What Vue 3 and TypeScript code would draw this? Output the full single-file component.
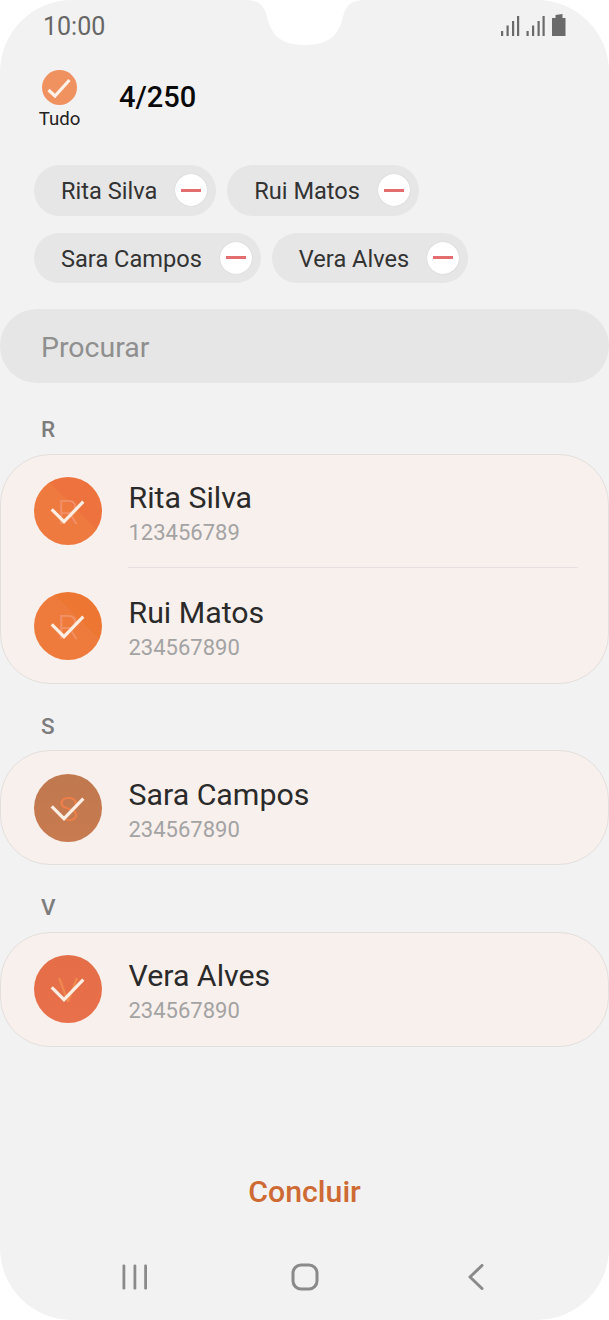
<script setup lang="ts">
interface Contact {
  name: string
  phone: string
  initial: string
  tint: string
  initialColor: string
}

interface Section {
  letter: string
  contacts: Contact[]
}

const chipRows: string[][] = [
  ['Rita Silva', 'Rui Matos'],
  ['Sara Campos', 'Vera Alves'],
]

const sections: Section[] = [
  {
    letter: 'R',
    contacts: [
      { name: 'Rita Silva', phone: '123456789', initial: 'R', tint: 'linear-gradient(45deg, #ee7a3f 57%, #ee723e 58%)', initialColor: '#f28f66' },
      { name: 'Rui Matos', phone: '234567890', initial: 'R', tint: 'linear-gradient(45deg, #ee7a3c 63%, #ec7632 64%)', initialColor: '#f29064' },
    ],
  },
  {
    letter: 'S',
    contacts: [
      { name: 'Sara Campos', phone: '234567890', initial: 'S', tint: 'linear-gradient(#c0784e, #c87a50)', initialColor: '#ee7f48' },
    ],
  },
  {
    letter: 'V',
    contacts: [
      { name: 'Vera Alves', phone: '234567890', initial: 'V', tint: 'linear-gradient(#e46e48, #e8704a)', initialColor: '#f0894f' },
    ],
  },
]
</script>

<template>
  <div class="screen">
    <!-- camera notch -->
    <svg class="notch" width="120" height="46" viewBox="0 0 120 46">
      <path d="M0 0 C13 0 19 5 21.5 15 C25 30 31 45 60 45 C89 45 95 30 98.5 15 C101 5 107 0 120 0 Z" fill="#fff" />
    </svg>

    <div class="status-bar">
      <span class="time">10:00</span>
      <svg class="status-icons" width="66" height="24" viewBox="0 0 66 24" fill="#6a6a6a">
        <rect x="0" y="17" width="2.2" height="5" />
        <rect x="5.5" y="11.5" width="2.2" height="10.5" />
        <rect x="11" y="7" width="2.2" height="15" />
        <rect x="16" y="2" width="2.2" height="20" />
        <rect x="25.5" y="17" width="2.2" height="5" />
        <rect x="31" y="11.5" width="2.2" height="10.5" />
        <rect x="36.5" y="7" width="2.2" height="15" />
        <rect x="41.5" y="2" width="2.2" height="20" />
        <path d="M51 4 H54.5 V1 L61.5 0 V4 H64.5 V22 H51 Z" />
      </svg>
    </div>

    <div class="select-row">
      <div class="select-all">
        <span class="all-circle">
          <svg width="35" height="35" viewBox="0 0 35 35">
            <path d="M6.5 20 L13 26 L27.5 10" fill="none" stroke="#fdf1ea" stroke-width="3.2" />
          </svg>
        </span>
        <span class="all-label">Tudo</span>
      </div>
      <span class="count">4/250</span>
    </div>

    <div class="chips">
      <div v-for="(row, i) in chipRows" :key="i" class="chip-row">
        <div v-for="chip in row" :key="chip" class="chip">
          <span class="chip-name">{{ chip }}</span>
          <span class="chip-remove"><span class="minus"></span></span>
        </div>
      </div>
    </div>

    <div class="search">Procurar</div>

    <div v-for="section in sections" :key="section.letter" class="section">
      <div class="letter">{{ section.letter }}</div>
      <div class="card">
        <div v-for="contact in section.contacts" :key="contact.name" class="contact">
          <span class="avatar" :style="{ background: contact.tint }">
            <span class="initial" :style="{ color: contact.initialColor }">{{ contact.initial }}</span>
            <svg class="avatar-check" width="68" height="68" viewBox="0 0 68 68">
              <path d="M17.7 32.3 L30 44.7 L49.3 24.7" fill="none" stroke="#fdeee4" stroke-width="3.2" />
            </svg>
          </span>
          <div class="contact-text">
            <div class="contact-name">{{ contact.name }}</div>
            <div class="contact-phone">{{ contact.phone }}</div>
          </div>
        </div>
      </div>
    </div>

    <div class="spacer"></div>

    <div class="done">Concluir</div>

    <div class="nav-bar">
      <svg width="26" height="26" viewBox="0 0 26 26" fill="#8a8a8a">
        <rect x="1.5" y="0.5" width="2.8" height="25" rx="1.2" />
        <rect x="12.5" y="0.5" width="2.8" height="25" rx="1.2" />
        <rect x="23.2" y="0.5" width="2.8" height="25" rx="1.2" />
      </svg>
      <svg class="nav-home" width="28" height="28" viewBox="0 0 28 28">
        <rect x="2" y="2" width="24" height="24" rx="8" fill="none" stroke="#8a8a8a" stroke-width="3" />
      </svg>
      <svg class="nav-back" width="18" height="26" viewBox="0 0 18 26">
        <path d="M15 1.5 L3 13 L15 24.5" fill="none" stroke="#8a8a8a" stroke-width="3" stroke-linecap="round" stroke-linejoin="round" />
      </svg>
    </div>
  </div>
</template>

<style scoped>
.screen {
  position: relative;
  display: flex;
  flex-direction: column;
  width: 609px;
  height: 1320px;
  overflow: hidden;
  background: #f2f2f2;
  border-radius: 72px;
  font-family: Roboto, 'Liberation Sans', sans-serif;
}

.notch {
  position: absolute;
  top: 0;
  left: 245px;
}

.status-bar {
  display: flex;
  align-items: center;
  justify-content: space-between;
  height: 52px;
  padding: 0 42px 0 43px;
}

.time {
  font-size: 25px;
  color: #666;
}

.select-row {
  display: flex;
  align-items: flex-start;
  height: 113px;
  padding: 18px 0 0 36px;
  box-sizing: border-box;
}

.select-all {
  display: flex;
  flex-direction: column;
  align-items: center;
  width: 47px;
}

.all-circle {
  display: block;
  width: 35px;
  height: 35px;
  border-radius: 50%;
  background: #f09160;
}

.all-circle svg {
  display: block;
}

.all-label {
  margin-top: 4px;
  font-size: 18.6px;
  line-height: 20px;
  color: #222;
}

.count {
  margin: 10px 0 0 36px;
  font-size: 29px;
  line-height: 34px;
  font-weight: 500;
  color: #0a0a0a;
}

.chips {
  display: flex;
  flex-direction: column;
  gap: 17px;
  padding-left: 34px;
}

.chip-row {
  display: flex;
  gap: 11px;
}

.chip {
  display: flex;
  align-items: center;
  height: 50.5px;
  padding: 0 9px 0 27px;
  border-radius: 26px;
  background: #e6e6e6;
}

.chip-name {
  padding-top: 2px;
  font-size: 23.6px;
  color: #333;
}

.chip-remove {
  display: flex;
  align-items: center;
  justify-content: center;
  width: 32px;
  height: 32px;
  margin-left: 18px;
  border-radius: 50%;
  background: #fff;
  box-shadow: 0 0 1px #bbb;
}

.minus {
  width: 20px;
  height: 3px;
  background: #e36d6f;
}

.search {
  display: flex;
  align-items: center;
  height: 74px;
  margin-top: 26px;
  padding: 3px 0 0 41px;
  box-sizing: border-box;
  border-radius: 37px;
  background: #e6e6e6;
  font-size: 28.5px;
  color: #8f8f8f;
}

.section {
  display: flex;
  flex-direction: column;
}

.letter {
  height: 71px;
  padding: 34px 0 0 41px;
  box-sizing: border-box;
  font-size: 22.5px;
  line-height: 25px;
  font-weight: 500;
  color: #7d7d7d;
}

.section + .section .letter {
  height: 66.4px;
  padding-top: 30px;
}

.card {
  border: 1px solid #e3dfdd;
  border-radius: 50px;
  background: #f8f0ec;
}

.contact {
  position: relative;
  display: flex;
  align-items: center;
  height: 113px;
  padding-left: 33px;
  gap: 26.5px;
  box-sizing: border-box;
}

.contact:first-child:not(:last-child) {
  height: 112px;
}

.contact + .contact {
  height: 116px;
  padding-top: 2px;
}

.contact + .contact::before {
  content: '';
  position: absolute;
  top: 0;
  left: 127px;
  right: 30px;
  height: 1px;
  background: #e5dfe0;
}

.avatar {
  position: relative;
  display: flex;
  align-items: center;
  justify-content: center;
  width: 68px;
  height: 68px;
  border-radius: 50%;
}

.initial {
  padding-top: 2px;
  font-size: 34px;
  font-weight: 300;
}

.avatar-check {
  position: absolute;
  inset: 0;
}

.contact-text {
  padding-top: 5px;
}

.contact-name {
  font-size: 30.3px;
  line-height: 36px;
  color: #2a2a2a;
}

.contact-phone {
  margin-top: 3px;
  font-size: 22px;
  line-height: 28px;
  color: #a3a3a3;
}

.spacer {
  flex: 1;
}

.done {
  text-align: center;
  font-size: 30.3px;
  line-height: 36px;
  font-weight: 500;
  color: #ce6a33;
}

.nav-bar {
  display: flex;
  align-items: center;
  height: 86px;
  margin-top: 24px;
  padding-left: 121px;
}

.nav-home {
  margin-left: 144px;
}

.nav-back {
  margin-left: 148px;
}
</style>

<style>
html,
body {
  background: #fff;
}
</style>
